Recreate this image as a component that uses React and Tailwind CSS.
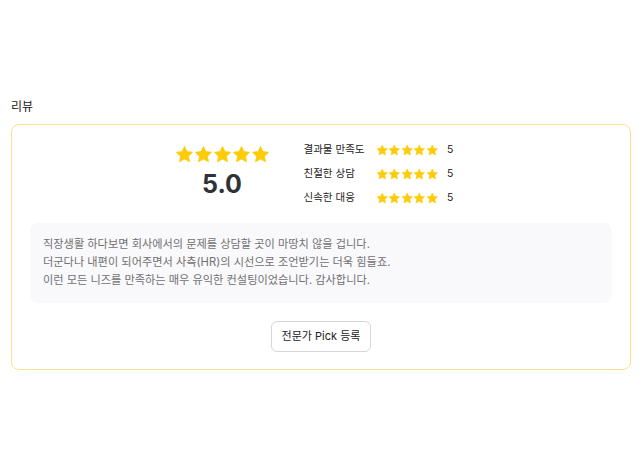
import React from 'react';

function Star({ size }) {
  return (
    <svg width={size} height={size} viewBox="0 0 24 24" className="shrink-0">
      <path
        d="M12 1.8l3.1 6.5 7.1.9-5.2 4.9 1.3 7.1L12 17.8l-6.3 3.4 1.3-7.1-5.2-4.9 7.1-.9z"
        fill="#fccc0a"
        stroke="#fccc0a"
        strokeWidth="1"
        strokeLinejoin="round"
      />
    </svg>
  );
}

function Stars({ size }) {
  return (
    <div className="flex">
      {[0, 1, 2, 3, 4].map((i) => (
        <Star key={i} size={size} />
      ))}
    </div>
  );
}

const scores = [
  { label: '결과물 만족도', value: 5 },
  { label: '친절한 상담', value: 5 },
  { label: '신속한 대응', value: 5 },
];

export default function App() {
  return (
    <div
      className="w-full h-screen bg-white pl-[11px] pr-[9px] pt-[98px]"
      style={{ fontFamily: 'Inter, "Noto Sans CJK KR", sans-serif' }}
    >
      <div className="text-[12px] text-[#222] mb-[8px]">리뷰</div>

      <div className="border border-[#fbe38a] rounded-[8px] px-[18px] pt-[20px] pb-[17px]">
        {/* summary */}
        <div className="flex justify-center gap-[34px] pr-[14px]">
          <div className="flex flex-col items-center">
            <Stars size={19} />
            <div className="text-[25px] font-bold text-[#2f3238] leading-none mt-[8px]">5.0</div>
          </div>
          <div className="flex flex-col gap-[6px] -mt-[4px]">
            {scores.map((s) => (
              <div key={s.label} className="flex items-center h-[18px] text-[10.5px] text-[#222]">
                <span className="w-[72px]">{s.label}</span>
                <Stars size={12.5} />
                <span className="ml-[9px]">{s.value}</span>
              </div>
            ))}
          </div>
        </div>

        {/* review text */}
        <div className="mt-[16px] bg-[#f9f9fc] rounded-[8px] px-[13px] pt-[12px] pb-[14px] text-[11.2px] leading-[18px] text-[#707070]">
          <p>직장생활 하다보면 회사에서의 문제를 상담할 곳이 마땅치 않을 겁니다.</p>
          <p>더군다나 내편이 되어주면서 사측(HR)의 시선으로 조언받기는 더욱 힘들죠.</p>
          <p>이런 모든 니즈를 만족하는 매우 유익한 컨설팅이었습니다. 감사합니다.</p>
        </div>

        {/* button */}
        <div className="flex justify-center mt-[18px]">
          <button className="h-[31px] px-[10px] border border-[#d6d6d6] rounded-[6px] bg-white text-[11px] text-[#222]">
            전문가 Pick 등록
          </button>
        </div>
      </div>
    </div>
  );
}
